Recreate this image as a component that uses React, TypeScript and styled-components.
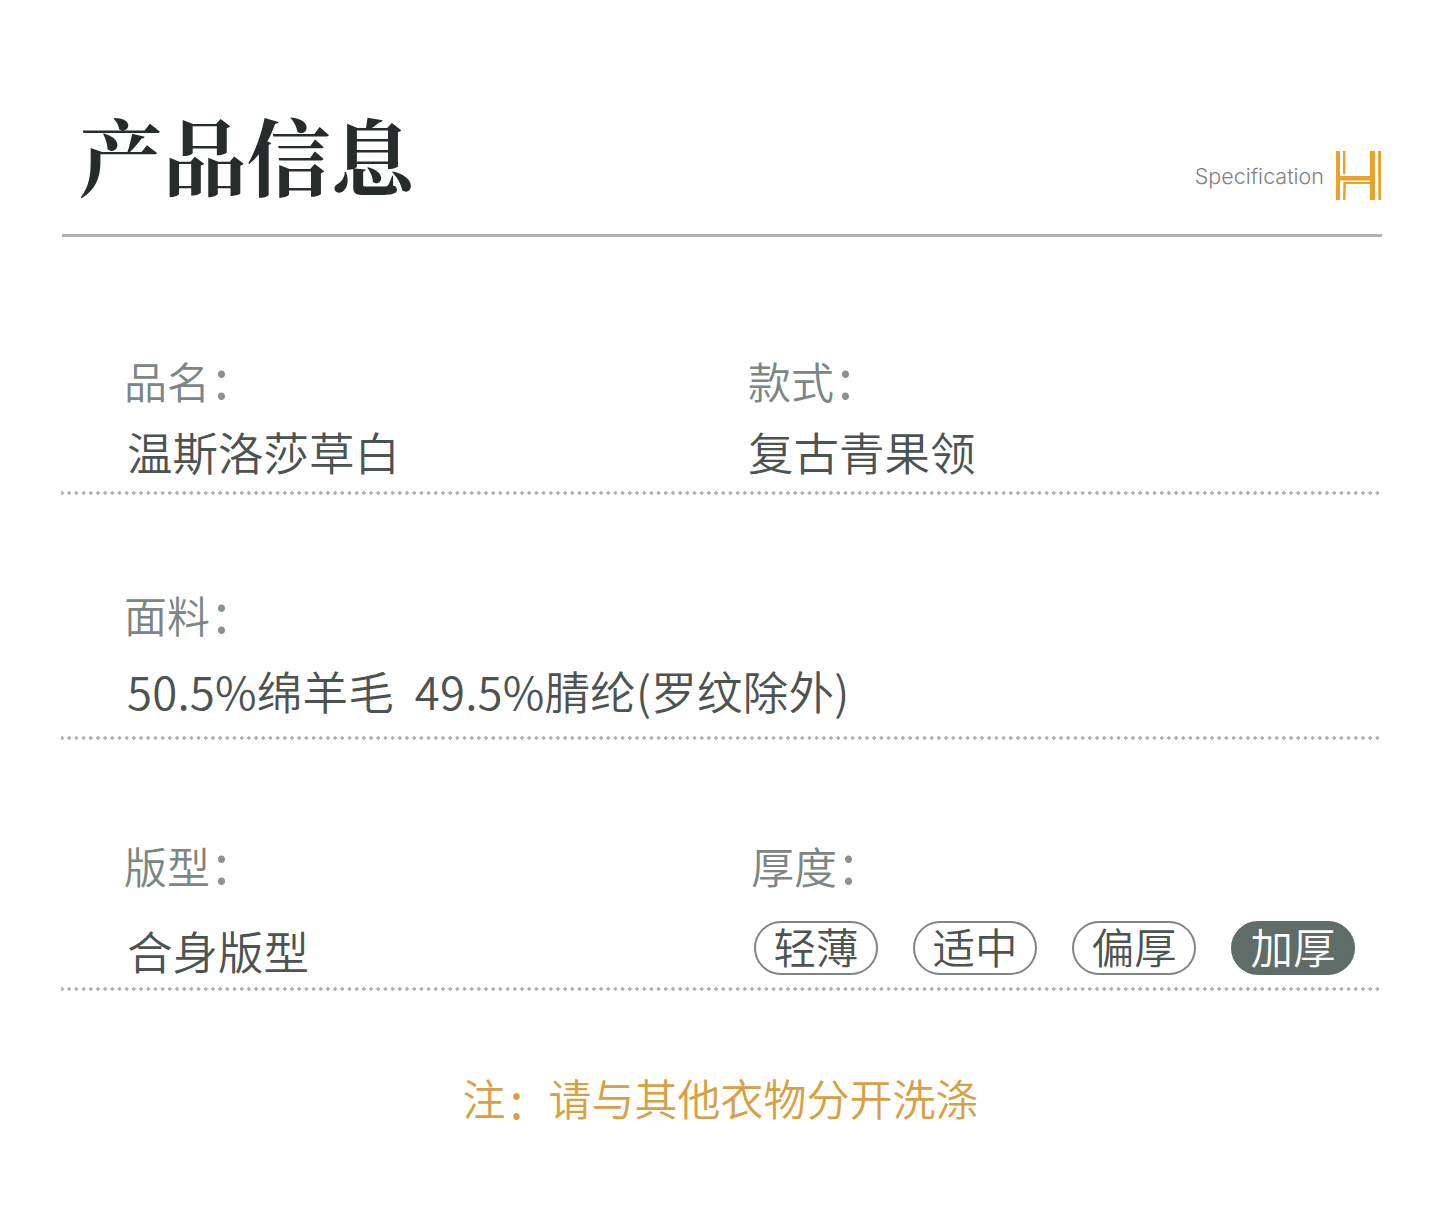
import React from 'react';
import styled, { createGlobalStyle } from 'styled-components';

const GlobalStyle = createGlobalStyle`
  html, body {
    margin: 0;
    padding: 0;
    background: #fff;
  }
  body {
    font-family: "Noto Sans CJK SC", "Noto Sans", sans-serif;
  }
`;

const Page = styled.div`
  width: 1440px;
  height: 1206px;
  box-sizing: border-box;
  padding: 105px 58px 0 61px;
  overflow: hidden;
`;

const Header = styled.header`
  height: 132px;
  box-sizing: border-box;
  padding: 0 0 32px 17px;
  display: flex;
  justify-content: space-between;
  align-items: flex-end;
  border-bottom: 3px solid #b1b3af;
  margin-left: 1px;
`;

const Title = styled.h1`
  margin: 0;
  font-family: "Noto Serif CJK SC", "Noto Sans CJK SC", serif;
  font-size: 84px;
  line-height: 96px;
  font-weight: 700;
  color: #262c2c;
  letter-spacing: -0.2px;
`;

const Brand = styled.div`
  display: flex;
  align-items: center;
  gap: 12px;
  margin-bottom: 2px;
`;

const BrandText = styled.span`
  font-family: Inter, "Liberation Sans", sans-serif;
  font-size: 21.5px;
  font-weight: 300;
  color: #7f817e;
`;

const Section = styled.section<{ $height: number; $pad: number }>`
  height: ${(p) => p.$height}px;
  width: 1319px;
  box-sizing: border-box;
  display: grid;
  grid-template-columns: 624px 1fr;
  align-content: end;
  padding-left: 64px;
  padding-bottom: ${(p) => p.$pad}px;
  background-image: radial-gradient(circle, #aeb2af 1.5px, transparent 2px);
  background-size: 7.2px 4px;
  background-repeat: repeat-x;
  background-position: -2.6px bottom;
`;

const Field = styled.div<{ $span?: boolean }>`
  grid-column: ${(p) => (p.$span ? '1 / -1' : 'auto')};
`;

const Label = styled.div<{ $gap: number; $x?: number }>`
  font-size: 43px;
  line-height: 48px;
  font-weight: 350;
  color: #7c8683;
  margin-left: ${(p) => p.$x ?? -1}px;
  margin-bottom: ${(p) => p.$gap}px;
`;

const Colon = styled.span<{ $size: number; $color: string }>`
  font-size: ${(p) => p.$size}px;
  line-height: 0;
  color: ${(p) => p.$color};
  font-family: "Noto Sans CJK SC", sans-serif;
  font-weight: 400;
  margin-left: 4px;
`;

const Value = styled.div<{ $flush?: boolean; $track?: number }>`
  font-size: 45.5px;
  line-height: 56px;
  font-weight: 350;
  color: #4c5351;
  padding-left: 2px;
  margin-left: ${(p) => (p.$flush ? -3 : 0)}px;
  letter-spacing: ${(p) => p.$track ?? 0}px;
  white-space: pre;
`;

const Pills = styled.div`
  display: flex;
  gap: 35px;
  padding-left: 5px;
`;

const Pill = styled.span<{ $active?: boolean }>`
  width: 124px;
  height: 54px;
  box-sizing: border-box;
  display: flex;
  align-items: center;
  justify-content: center;
  padding-bottom: 3px;
  border-radius: 27px;
  border: 2px solid ${(p) => (p.$active ? '#606c68' : '#7d8683')};
  background: ${(p) => (p.$active ? '#606c68' : '#fff')};
  color: ${(p) => (p.$active ? '#fff' : '#4c5351')};
  font-size: 42.5px;
  font-weight: 350;
  line-height: 1;
`;

const Note = styled.p`
  margin: 78px 0 0;
  display: flex;
  justify-content: center;
  font-size: 43px;
  font-weight: 350;
  line-height: 56px;
  color: #d8a045;
  padding-right: 2px;
`;

const NoteColon = styled.span`
  width: 43px;
  font-size: 50px;
  font-weight: 400;
  padding-left: 4px;
  box-sizing: border-box;
`;

function LogoMark() {
  return (
    <svg width="46" height="49" viewBox="0 0 46 49" fill="#eaa32a">
      <rect x="0" y="0" width="4" height="49" />
      <rect x="7" y="0" width="2.4" height="23" />
      <path d="M7 49 L7.4 31 H34 V33 H10 L9.4 49 Z" />
      <rect x="34" y="0" width="5" height="49" />
      <path d="M42 0 H45 V49 H42.4 Z" />
      <rect x="4" y="25" width="30" height="4.5" />
    </svg>
  );
}

const thickness = ['轻薄', '适中', '偏厚', '加厚'];

const LabelColon = () => <Colon $size={54} $color="#8b9290">:</Colon>;

export default function App() {
  return (
    <Page>
      <GlobalStyle />
      <Header>
        <Title>产品信息</Title>
        <Brand>
          <BrandText>Specification</BrandText>
          <LogoMark />
        </Brand>
      </Header>

      <Section $height={258} $pad={16}>
        <Field>
          <Label $gap={19}>品名<LabelColon /></Label>
          <Value>温斯洛莎草白</Value>
        </Field>
        <Field>
          <Label $gap={19}>款式<LabelColon /></Label>
          <Value $flush>复古青果领</Value>
        </Field>
      </Section>

      <Section $height={245} $pad={22}>
        <Field $span>
          <Label $gap={24}>面料<LabelColon /></Label>
          <Value $track={0.22}>50.5%绵羊毛  49.5%腈纶(罗纹除外)</Value>
        </Field>
      </Section>

      <Section $height={251} $pad={13}>
        <Field>
          <Label $gap={33}>版型<LabelColon /></Label>
          <Value>合身版型</Value>
        </Field>
        <Field>
          <Label $gap={32} $x={2}>厚度<LabelColon /></Label>
          <Pills>
            {thickness.map((t) => (
              <Pill key={t} $active={t === '加厚'}>{t}</Pill>
            ))}
          </Pills>
        </Field>
      </Section>

      <Note>注<NoteColon>:</NoteColon>请与其他衣物分开洗涤</Note>
    </Page>
  );
}
